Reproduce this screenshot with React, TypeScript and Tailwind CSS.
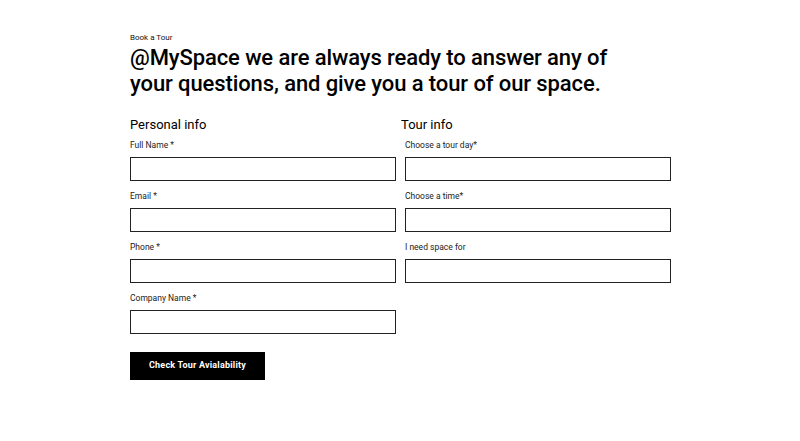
const Field = ({ label }: { label: string }) => (
  <div className="flex flex-col">
    <label className="h-[10px] text-[8.5px] leading-[10px] text-[#222]">{label}</label>
    <input
      type="text"
      className="mt-[7px] h-[24px] w-full border-[1.5px] border-[#222] bg-white outline-none"
    />
  </div>
);

export default function App() {
  return (
    <div className="min-h-[441px] w-[800px] bg-white font-['Roboto',sans-serif] text-black">
      <div className="pl-[130px] pt-[33px]">
        <p className="text-[8px] leading-[10px] text-[#111]">Book a Tour</p>
        <h1 className="mt-[2px] w-[520px] text-[22px] font-medium leading-[26px] tracking-[-0.1px]">
          @MySpace we are always ready to answer any of your questions, and give you a tour of our
          space.
        </h1>

        <form className="mt-[20px] w-[541px]">
          <div className="grid grid-cols-2 gap-x-[9px]">
            <div className="flex flex-col">
              <h2 className="text-[13px] leading-[16px]">Personal info</h2>
              <div className="mt-[7px] flex flex-col gap-[10px]">
                <Field label="Full Name *" />
                <Field label="Email *" />
                <Field label="Phone *" />
                <Field label="Company Name *" />
              </div>
            </div>
            <div className="flex flex-col">
              <h2 className="-ml-[4px] text-[13px] leading-[16px]">Tour info</h2>
              <div className="mt-[7px] flex flex-col gap-[10px]">
                <Field label="Choose a tour day*" />
                <Field label="Choose a time*" />
                <Field label="I need space for" />
              </div>
            </div>
          </div>
          <button
            type="button"
            className="mt-[18px] h-[28px] w-[135px] bg-black text-[9px] font-bold tracking-[0.2px] text-white"
          >
            Check Tour Avialability
          </button>
        </form>
      </div>
    </div>
  );
}
